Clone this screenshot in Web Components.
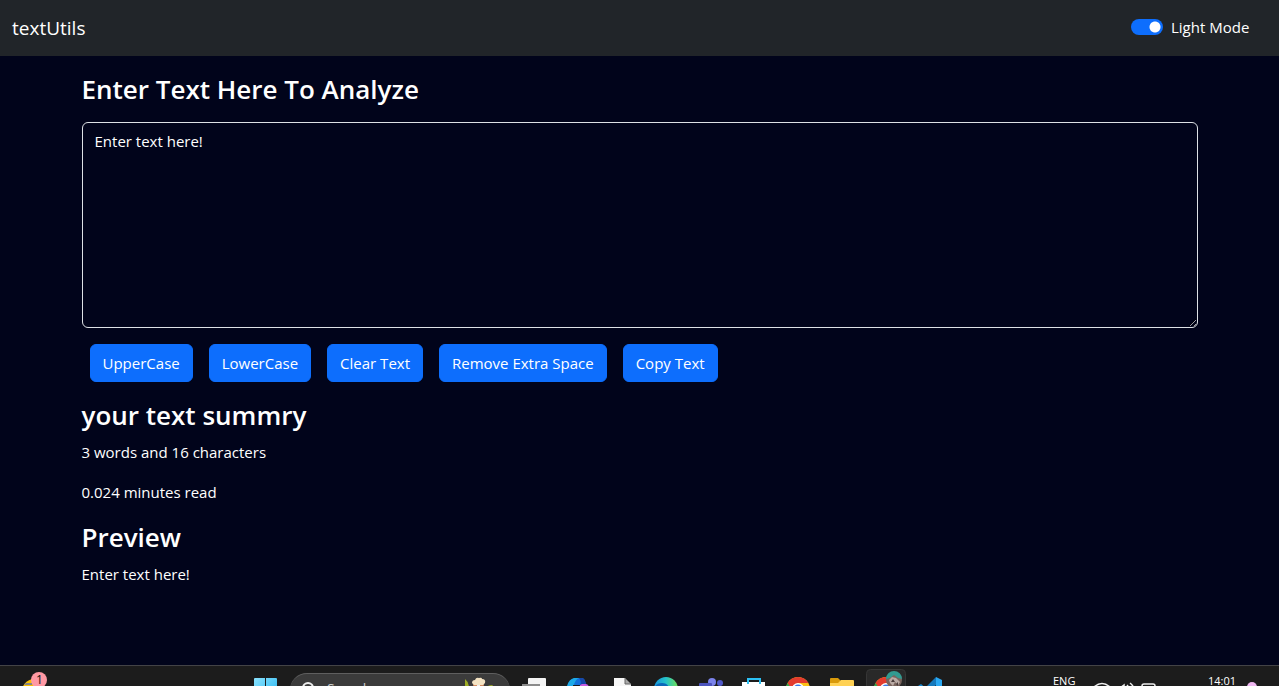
<!DOCTYPE html>
<html lang="en">
<head>
<meta charset="utf-8">
<meta name="viewport" content="width=device-width, initial-scale=1">
<title>textUtils</title>
<style>
  html, body { height: 100%; }
  body {
    margin: 0;
    display: flex;
    flex-direction: column;
    overflow: hidden;
    background: #01041b;
    color: #fff;
    font: 15px/24px "Open Sans", "Noto Sans", sans-serif;
  }
  text-form { flex: 1; }
</style>
</head>
<body>
<nav-bar brand="textUtils"><mode-switch>Light Mode</mode-switch></nav-bar>
<text-form heading="Enter Text Here To Analyze"></text-form>
<task-bar></task-bar>

<script>
const define = (name, html, setup) => {
  const template = document.createElement('template');
  template.innerHTML = html;
  customElements.define(name, class extends HTMLElement {
    constructor() {
      super();
      this.attachShadow({ mode: 'open' }).append(template.content.cloneNode(true));
    }
    connectedCallback() { if (setup) setup(this, this.shadowRoot); }
  });
};

define('nav-bar', `
  <style>
    :host { display: block; background: #212529; }
    nav { display: flex; align-items: center; justify-content: space-between; box-sizing: border-box; height: 56px; padding: 0 24px 0 12px; }
    a { color: #fff; text-decoration: none; font-size: 19px; line-height: 30px; }
  </style>
  <nav><a href="#"></a><slot></slot></nav>`,
  (host, root) => { root.querySelector('a').textContent = host.getAttribute('brand'); });

define('mode-switch', `
  <style>
    :host { display: block; }
    label { display: flex; align-items: center; gap: 8px; padding-bottom: 2px; }
    span { min-width: 84px; }
    input {
      appearance: none; margin: 0; width: 32px; height: 16px; border-radius: 8px;
      background: #0d6efd radial-gradient(circle at 24px 8px, #fff 5px, transparent 6px);
    }
    input:not(:checked) { background: #6c757d radial-gradient(circle at 8px 8px, #fff 5px, transparent 6px); }
  </style>
  <label><input type="checkbox" role="switch" checked><span><slot></slot></span></label>`);

define('action-button', `
  <style>
    :host { display: block; }
    button { font: inherit; color: #fff; background: #0d6efd; border: 1px solid #0d6efd; border-radius: 6px; padding: 6px 12px; cursor: pointer; display: block; }
    button:hover { background: #0b5ed7; }
  </style>
  <button type="button"><slot></slot></button>`);

define('text-section', `
  <style>
    :host { display: block; }
    h2 { margin: 0 0 8px; font-size: 26px; line-height: 34px; font-weight: 600; }
    ::slotted(p) { margin: 0 0 16px; }
  </style>
  <section><h2></h2><slot></slot></section>`,
  (host, root) => { root.querySelector('h2').textContent = host.getAttribute('heading'); });

define('text-form', `
  <style>
    :host { display: block; }
    main { box-sizing: border-box; max-width: 1140px; margin: 0 auto; padding: 16px 12px 0; }
    h1 { margin: 0 0 16px; font-size: 26px; line-height: 34px; font-weight: 600; }
    textarea {
      display: block; box-sizing: border-box; width: 100%; padding: 6px 12px; margin: 0 0 16px;
      font: inherit; color: inherit; background: transparent; border: 1px solid #dee2e6; border-radius: 6px; resize: vertical;
    }
    .actions { display: flex; flex-wrap: wrap; gap: 16px; padding: 0 8px; margin-bottom: 16px; }
  </style>
  <main>
    <h1><label for="box"></label></h1>
    <textarea id="box" rows="8" spellcheck="false">Enter text here!</textarea>
    <div class="actions">
      <action-button data-do="upper">UpperCase</action-button>
      <action-button data-do="lower">LowerCase</action-button>
      <action-button data-do="clear">Clear Text</action-button>
      <action-button data-do="trim">Remove Extra Space</action-button>
      <action-button data-do="copy">Copy Text</action-button>
    </div>
    <text-section heading="your text summry"><p id="count"></p><p id="time"></p></text-section>
    <text-section heading="Preview"><p id="preview"></p></text-section>
  </main>`,
  (host, root) => {
    const $ = s => root.querySelector(s);
    const box = $('#box');
    $('label').textContent = host.getAttribute('heading');
    const update = () => {
      const words = box.value.split(/\s+/).filter(Boolean).length;
      $('#count').textContent = words + ' words and ' + box.value.length + ' characters';
      $('#time').textContent = Number((words * 0.008).toFixed(3)) + ' minutes read';
      $('#preview').textContent = box.value;
    };
    const ops = {
      upper: t => t.toUpperCase(),
      lower: t => t.toLowerCase(),
      clear: () => '',
      trim: t => t.split(/\s+/).join(' '),
      copy: t => { navigator.clipboard && navigator.clipboard.writeText(t); return t; }
    };
    box.addEventListener('input', update);
    root.querySelectorAll('[data-do]').forEach(b =>
      b.addEventListener('click', () => { box.value = ops[b.dataset.do](box.value); update(); }));
    update();
  });

define('task-icon', `
  <style>
    :host { display: block; flex: none; width: 44px; height: 48px; }
    button { display: block; width: 100%; height: 100%; padding: 0; border: 0; background: none; }
    ::slotted(svg) { display: block; }
  </style>
  <button type="button"><slot></slot></button>`,
  (host, root) => root.querySelector('button').setAttribute('aria-label', host.getAttribute('name')));

const icon = (name, art) => `<task-icon name="${name}"><svg width="44" height="48" viewBox="0 0 44 48">${art}</svg></task-icon>`;
const chrome = `<circle cx="22" cy="23" r="12" fill="#fbc116"/><path d="M11.600 17A12 12 0 0 0 22 35L27 26 22 23Z" fill="#2da94f"/><path d="M11.600 17A12 12 0 0 1 32.400 17H22L16 24Z" fill="#e33b2e"/><circle cx="22" cy="23" r="6" fill="#fff"/><circle cx="22" cy="23" r="4.500" fill="#3b78e7"/>`;

define('task-bar', `
  <style>
    :host { display: block; flex: none; height: 20px; overflow: hidden; background: #1c1c1c; border-top: 1px solid #434346; }
    footer { display: grid; grid-template-columns: 244px auto 1fr; height: 48px; font-size: 11px; line-height: 16px; }
    .apps { display: flex; }
    svg { display: block; }
    .search { display: flex; box-sizing: border-box; width: 220px; height: 34px; margin: 7px 2px 0; padding: 0 16px 0 10px; border-radius: 17px; background: #3b3b3b; border-top: 1px solid #5f5f5f; }
    input { flex: 1; min-width: 0; height: 28px; border: 0; padding: 0 0 0 9px; background: none; color: #ddd; font: 14px/20px "Open Sans", sans-serif; outline: 0; }
    input::placeholder { color: #ccc; opacity: 1; }
    .tray { display: flex; justify-content: flex-end; padding: 7px 21px 0 0; }
    .lang { width: 40px; }
    .status { width: 107px; }
    .clock { width: 44px; text-align: center; }
    .badge { font-size: 12px; }
  </style>
  <footer>
    <svg class="badge" width="60" height="48" viewBox="0 0 60 48" role="img" aria-label="Widgets">
      <path d="M22 24q1-8 10-11l8 1v10z" fill="#fbbf00"/><path d="M24 19l2-2h6v2z" fill="#858585"/>
      <circle cx="39" cy="14" r="8" fill="#ff99a4"/><text x="36" y="18" fill="#111">1</text>
    </svg>
    <div class="apps">
      ${icon('Start', '<defs><linearGradient id="w" x2="1" y2="1"><stop stop-color="#8be3ff"/><stop offset="1" stop-color="#20b1ee"/></linearGradient></defs><path d="M10 13q0-1 1-1h10v11H10zM22 12h10q1 0 1 1v10H22zM10 24h11v11H10zM22 24h11v11H22z" fill="url(#w)"/>')}
      <div class="search">
        <svg width="18" height="32" viewBox="0 0 18 32"><circle cx="8" cy="14" r="5" fill="none" stroke="#eee" stroke-width="2"/><path d="m12 18 5 5" stroke="#eee" stroke-width="2"/></svg>
        <input type="search" placeholder="Search" aria-label="Search">
        <svg width="34" height="32" viewBox="0 0 34 32"><path d="M5 14V5q4 3 4 9zM26 14q1-3 7-3l-3 4z" fill="#9dac24"/><path d="M13 10h11l-2 12h-7z" fill="#d48c60"/><path d="M17 10h3v12h-3z" fill="#eee"/><path d="M12 9q0-3 3-3 1-3 4-2 3-1 3 1 4 0 3 4l-2 2H14z" fill="#f4e3c3"/></svg>
      </div>
      ${icon('Task View', '<path d="M16 13q0-1 1-1h16q1 0 1 1v15H16z" fill="#f4f4f4"/><path d="M10 18h18v14H10z" fill="#8b8b8b"/>')}
      ${icon('Copilot', '<path d="M11 24q1-12 10-12h5q3 0 4 7h-6l-5 5z" fill="#1370dc"/><path d="M11 20q2-7 7-8h5q-5 2-6 12h-6z" fill="#1ca9e8"/><path d="M23 12h3q3 0 4 7h-6q2-3-1-7z" fill="#1648aa"/><path d="M17 19h8v8h-8z" fill="#1c1c1c"/><path d="M24 19l2-1h4q3 0 4 7H23z" fill="#c75ce0"/><path d="M11 20h6l-1 6h-5z" fill="#30b4a0"/>')}
      ${icon('Document', '<path d="M14 12h11l6 6v17H14z" fill="#f7f7f7"/><path d="M25 12v6h6z" fill="#aaa" stroke="#666"/>')}
      ${icon('Edge', '<defs><linearGradient id="e"><stop stop-color="#1793dc"/><stop offset=".5" stop-color="#25c3ca"/><stop offset="1" stop-color="#71df55"/></linearGradient></defs><circle cx="22" cy="23" r="12" fill="url(#e)"/><path d="M10 24q1-7 8-7 5 0 7 4v14q-14 0-15-11z" fill="#0b68b9"/>')}
      ${icon('Teams', '<circle cx="24" cy="16" r="4" fill="#7b83eb"/><circle cx="32" cy="17" r="3" fill="#5059c9"/><path d="M17 20h12v10H17z" fill="#7b83eb"/><rect x="11" y="17" width="13" height="12" rx="1" fill="#4b53bc"/><path d="M14 21h7" stroke="#fff" stroke-width="2"/>')}
      ${icon('Store', '<path d="M10 16h23v17H10z" fill="#fff"/><path d="M16 18v-5h12v5" fill="none" stroke="#2cc1f5" stroke-width="2"/><path d="M17 21h4v4h-4z" fill="#f25022"/><path d="M22 21h4v4h-4z" fill="#7fba00"/>')}
      ${icon('Chrome', chrome)}
      ${icon('Files', '<path d="M10 13q0-1 1-1h7l3 3v6H10z" fill="#d99a0b"/><path d="M10 17h8l3-3h12q1 0 1 1v16H10z" fill="#ffd153"/>')}
      ${icon('Chrome profile', '<rect x="2.500" y="3.500" width="39" height="40" rx="4" fill="#292929" stroke="#363636"/>' + chrome + '<circle cx="30" cy="14" r="8" fill="#79645d"/><path d="M22 13A8 8 0 0 1 38 13L34 12 30 9 26 12z" fill="#319b91"/><path d="m25 14 3-3 4 1 4 4-2 3-3-3-2 4-3-3z" fill="#b9aaa4"/><path d="m27 16 2-3 2 3zM32 18l2-2v4z" fill="#493b39"/>')}
      ${icon('Code', '<path d="m28 11 6 3v18l-6 3z" fill="#2aa8f2"/><path d="M28 11v8L14 31l-3-3z" fill="#1479bd"/><path d="m10 20 3-2 14 12v5z" fill="#1587ce"/>')}
    </div>
    <div class="tray">
      <span class="lang">ENG</span>
      <svg class="status" height="32" viewBox="0 0 107 32" fill="none" stroke="#eee" stroke-width="1.500" role="img" aria-label="Network, volume, battery"><path d="M1 14q8-7 16 0M27 15l4-3v6M34 12q2 2 2 5M37 10q4 3 4 7"/><rect x="49" y="11" width="13" height="10" rx="2"/></svg>
      <span class="clock">14:01</span>
      <svg width="14" height="32" viewBox="0 0 14 32" role="img" aria-label="Notifications"><circle cx="8" cy="14" r="5" fill="#efb7f1"/></svg>
    </div>
  </footer>`);
</script>
</body>
</html>
